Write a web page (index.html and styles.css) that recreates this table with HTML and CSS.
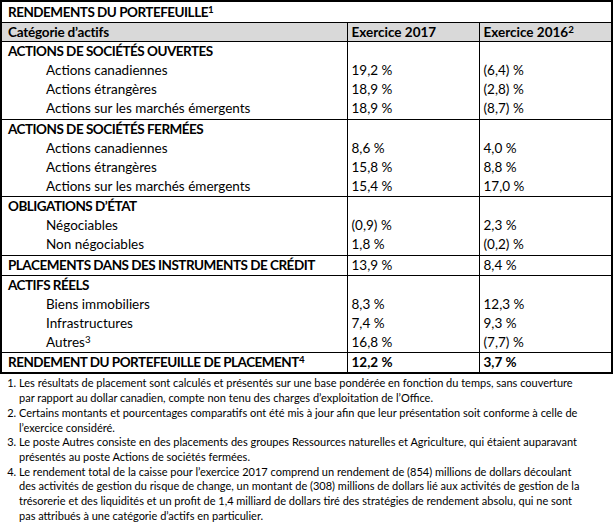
FILE: index.html
```html
<!DOCTYPE html>
<html lang="fr">
<head>
<meta charset="utf-8">
<link rel="stylesheet" href="styles.css">
</head>
<body>
<table class="ret">
  <colgroup><col class="c1"><col class="c2"><col class="c3"></colgroup>
  <tr class="title"><td colspan="3">RENDEMENTS DU PORTEFEUILLE<sup>1</sup></td></tr>
  <tr class="head"><td>Catégorie d’actifs</td><td>Exercice 2017</td><td>Exercice 2016<sup>2</sup></td></tr>

  <tr class="sec"><td class="h">ACTIONS DE SOCIÉTÉS OUVERTES</td><td></td><td></td></tr>
  <tr><td class="sub">Actions canadiennes</td><td>19,2 %</td><td>(6,4) %</td></tr>
  <tr><td class="sub">Actions étrangères</td><td>18,9 %</td><td>(2,8) %</td></tr>
  <tr><td class="sub">Actions sur les marchés émergents</td><td>18,9 %</td><td>(8,7) %</td></tr>

  <tr class="sec"><td class="h">ACTIONS DE SOCIÉTÉS FERMÉES</td><td></td><td></td></tr>
  <tr><td class="sub">Actions canadiennes</td><td>8,6 %</td><td>4,0 %</td></tr>
  <tr><td class="sub">Actions étrangères</td><td>15,8 %</td><td>8,8 %</td></tr>
  <tr><td class="sub">Actions sur les marchés émergents</td><td>15,4 %</td><td>17,0 %</td></tr>

  <tr class="sec"><td class="h">OBLIGATIONS D’ÉTAT</td><td></td><td></td></tr>
  <tr><td class="sub">Négociables</td><td>(0,9) %</td><td>2,3 %</td></tr>
  <tr><td class="sub">Non négociables</td><td>1,8 %</td><td>(0,2) %</td></tr>

  <tr class="sec"><td class="h">PLACEMENTS DANS DES INSTRUMENTS DE CRÉDIT</td><td>13,9 %</td><td>8,4 %</td></tr>

  <tr class="sec"><td class="h">ACTIFS RÉELS</td><td></td><td></td></tr>
  <tr><td class="sub">Biens immobiliers</td><td>8,3 %</td><td>12,3 %</td></tr>
  <tr><td class="sub">Infrastructures</td><td>7,4 %</td><td>9,3 %</td></tr>
  <tr><td class="sub">Autres<sup>3</sup></td><td>16,8 %</td><td>(7,7) %</td></tr>

  <tr class="sec total"><td class="h">RENDEMENT DU PORTEFEUILLE DE PLACEMENT<sup>4</sup></td><td>12,2 %</td><td>3,7 %</td></tr>
</table>

<ol class="notes">
  <li>Les résultats de placement sont calculés et présentés sur une base pondérée en fonction du temps, sans couverture<br>par rapport au dollar canadien, compte non tenu des charges d’exploitation de l’Office.</li>
  <li>Certains montants et pourcentages comparatifs ont été mis à jour afin que leur présentation soit conforme à celle de<br>l’exercice considéré.</li>
  <li>Le poste Autres consiste en des placements des groupes Ressources naturelles et Agriculture, qui étaient auparavant<br>présentés au poste Actions de sociétés fermées.</li>
  <li>Le rendement total de la caisse pour l’exercice 2017 comprend un rendement de (854) millions de dollars découlant<br>des activités de gestion du risque de change, un montant de (308) millions de dollars lié aux activités de gestion de la<br>trésorerie et des liquidités et un profit de 1,4 milliard de dollars tiré des stratégies de rendement absolu, qui ne sont<br>pas attribués à une catégorie d’actifs en particulier.</li>
</ol>
</body>
</html>
```

FILE: styles.css
```css
html, body {
  margin: 0;
  padding: 0;
  background: #fff;
}
body {
  font-family: Lato, "Open Sans", sans-serif;
  color: #000;
}
.ret {
  border-collapse: collapse;
  width: 613px;
  margin: 0;
  table-layout: fixed;
  font-size: 13.5px;
  border: 2px solid #000;
}
.c1 { width: 346px; }
.c2 { width: 132px; }
.c3 { width: 133px; }
.ret td {
  padding: 0 4px 0 4px;
  height: 19.15px;
  line-height: 15px;
  vertical-align: middle;
  white-space: nowrap;
  border-left: 1px solid #000;
}
.ret td:first-child { border-left: none; padding-left: 6px; }
.ret td.sub { padding-left: 44px; }
.title td {
  font-weight: bold;
  height: 20px;
  border-bottom: 1px solid #000;
  letter-spacing: -0.5px;
}
.head td {
  background: #d9d9d9;
  font-weight: bold;
  height: 18px;
}
.head td:first-child { letter-spacing: -0.2px; }
.sec td { border-top: 1px solid #000; }
.h { font-weight: bold; letter-spacing: -0.5px; }
.total td { font-weight: bold; }
sup {
  font-size: 0.72em;
  line-height: 0;
  vertical-align: 0.45em;
  letter-spacing: 0;
}
.notes {
  margin: 2px 0 0 0;
  padding: 0 0 0 19px;
  font-size: 11px;
  line-height: 14.7px;
  white-space: nowrap;
}
.notes li { padding-left: 0; }
```
